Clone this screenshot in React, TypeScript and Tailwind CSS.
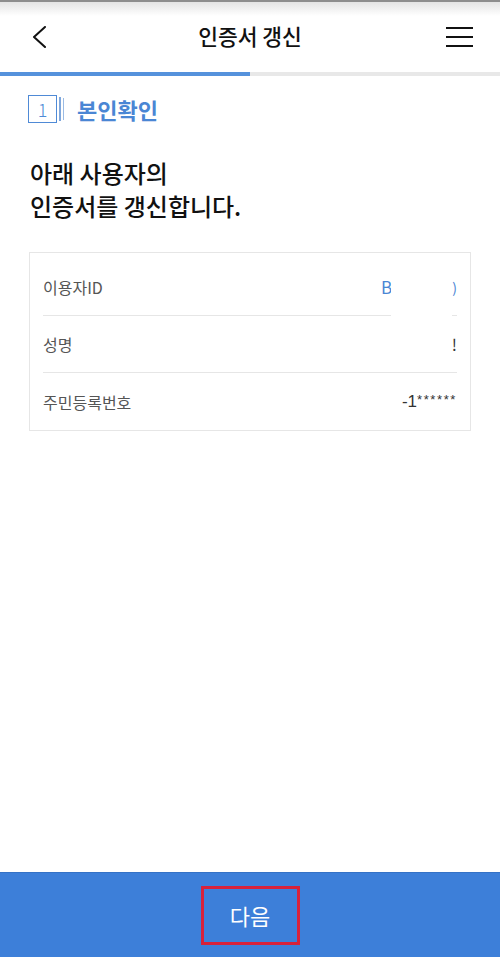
import React from "react";

const rows = [
  { label: "이용자ID", value: "id" },
  { label: "성명", value: "name" },
  { label: "주민등록번호", value: "rrn" },
];

const App = () => {
  return (
    <div
      className="relative flex h-[957px] w-[500px] flex-col overflow-hidden bg-white"
      style={{ fontFamily: '"Noto Sans CJK KR", "Noto Sans", sans-serif' }}
    >
      {/* header */}
      <div className="h-[2px] bg-[#8e8e8e]" />
      <div className="relative flex h-[70px] items-center justify-center bg-[linear-gradient(to_bottom,#e4e4e4_0px,#ffffff_14px)]">
        <button className="absolute left-[30px] top-[24px]">
          <svg width="20" height="22" viewBox="0 0 20 22" fill="none">
            <path d="M15 1 L4 11 L15 21" stroke="#111" strokeWidth="2" strokeLinecap="round" strokeLinejoin="round" />
          </svg>
        </button>
        <h1 className="mt-[-2px] text-[21.5px] font-medium text-[#111]">인증서 갱신</h1>
        <button className="absolute right-[27px] top-[25px] flex w-[27px] flex-col gap-[7px]">
          <span className="h-[2px] w-full bg-[#111]" />
          <span className="h-[2px] w-full bg-[#111]" />
          <span className="h-[2px] w-full bg-[#111]" />
        </button>
      </div>

      {/* progress */}
      <div className="flex h-[4px]">
        <div className="w-[250px] bg-[#5592dc]" />
        <div className="flex-1 bg-[#e8e8e8]" />
      </div>

      {/* step */}
      <div className="mt-[19px] flex items-center pl-[28px]">
        <div className="flex h-[28px] w-[29px] items-center justify-center border border-[#4f8ad6] text-[18px] font-light leading-none text-[#4f8ad6]">
          1
        </div>
        <span className="ml-[2px] h-[24px] w-[2px] bg-[#7fa7dc]" />
        <span className="ml-[2px] h-[22px] w-[1px] bg-[#9bbbe4]" />
        <span className="ml-[13px] text-[22px] font-bold leading-none text-[#4a86d4]">본인확인</span>
      </div>

      {/* heading */}
      <div className="mt-[33px] pl-[30px] text-[24px] font-medium leading-[33px] text-[#111]">
        <p>아래 사용자의</p>
        <p>인증서를 갱신합니다.</p>
      </div>

      {/* info card */}
      <div className="relative mx-[29px] mt-[30px] border border-[#e6e6e6] px-[13px] pt-[6px]">
        {rows.map((row, i) => (
          <div
            key={row.label}
            className={
              "flex h-[57px] items-center justify-between text-[16px] " +
              (i < rows.length - 1 ? "border-b border-[#e6e6e6]" : "")
            }
          >
            <span className="text-[#555]">{row.label}</span>
            {row.value === "id" && (
              <span className="flex items-center text-[#4a86d4]">
                <span className="text-[17px]">B</span>
                <span className="w-[60px]" />
                <span className="text-[14px]">)</span>
              </span>
            )}
            {row.value === "name" && <span className="text-[#333]">!</span>}
            {row.value === "rrn" && (
              <span className="flex items-start text-[#333]" style={{ fontFamily: '"Liberation Sans", sans-serif' }}>
                <span className="text-[17px] leading-none">-1</span>
                <span className="text-[13px] leading-none tracking-[1.6px]">******</span>
              </span>
            )}
          </div>
        ))}
        {/* masked region */}
        <div className="absolute left-[361px] top-[10px] h-[64px] w-[61px] bg-white" />
      </div>

      <div className="flex-1" />

      {/* bottom button */}
      <div className="flex h-[85px] items-center justify-center border-t border-[#3572c6] bg-[#3d7fd9]">
        <div className="flex h-[59px] w-[99px] items-center justify-center border-[3px] border-[#d7213a]">
          <span className="text-[22px] text-white">다음</span>
        </div>
      </div>
    </div>
  );
};

export default App;
